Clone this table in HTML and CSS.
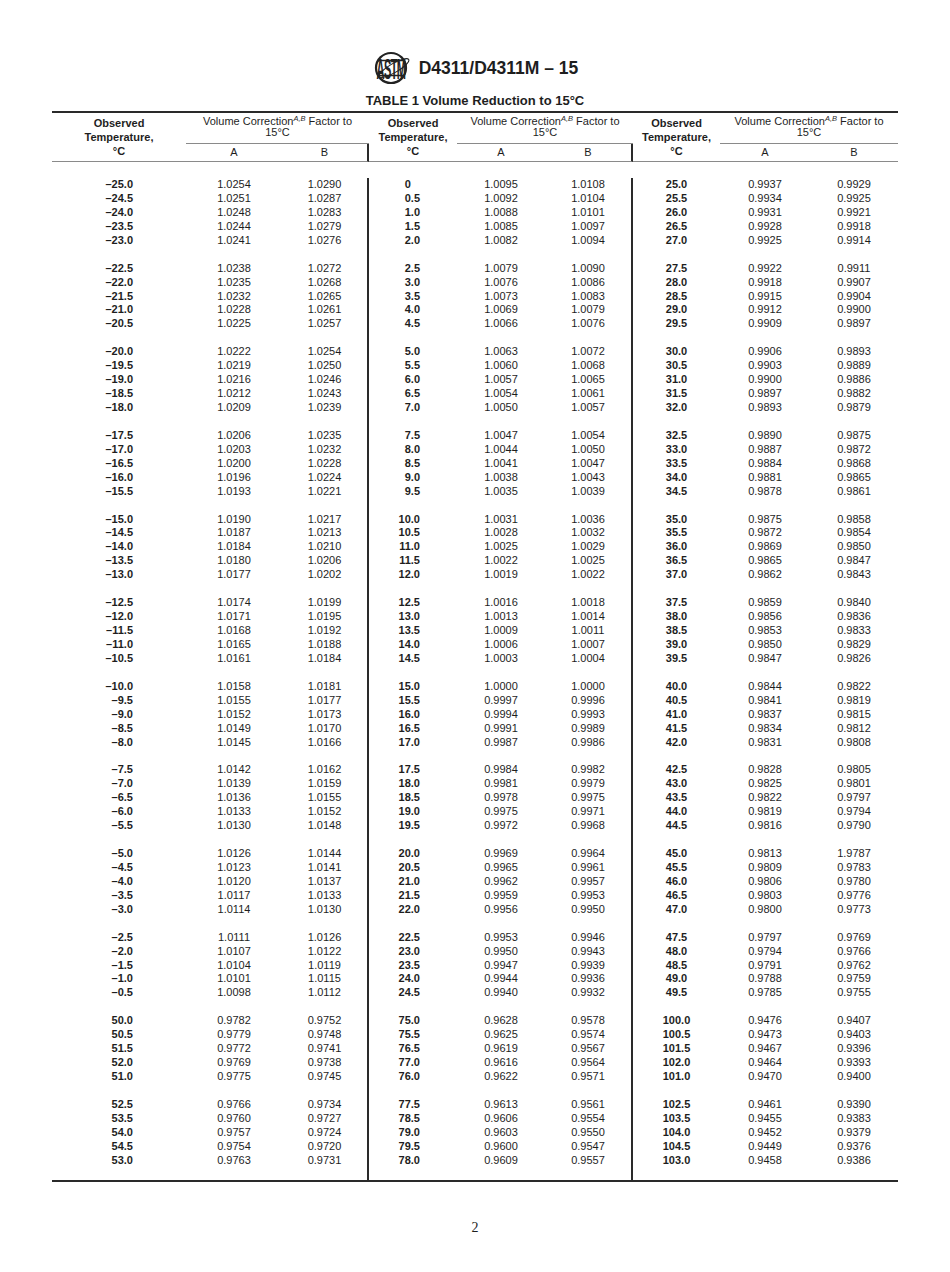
FILE: index.html
```html
<!DOCTYPE html>
<html lang="en">
<head>
<meta charset="utf-8">
<title>D4311/D4311M – 15 Table 1</title>
<link rel="stylesheet" href="styles.css">
</head>
<body>
<div class="page">
  <div class="doc-head">
    <svg class="logo" width="40" height="34" viewBox="0 0 40 34" aria-label="ASTM">
      <circle cx="19" cy="17" r="15" fill="none" stroke="#222" stroke-width="2.2"/>
      <path d="M6 9.5 H32 M6 24.5 H32" stroke="#222" stroke-width="1.4" fill="none"/>
      <ellipse cx="22" cy="17" rx="17" ry="4.5" fill="none" stroke="#222" stroke-width="1.1" transform="rotate(-30 22 17)"/>
      <text class="logo-letters" x="19" y="10.9" transform="scale(1,2.6)">ASTM</text>
    </svg>
    <span class="doc-title">D4311/D4311M – 15</span>
  </div>
  <div class="caption">TABLE 1 Volume Reduction to 15°C</div>
  <table class="tbl">
    <colgroup>
      <col class="c-t1"><col class="c-a1"><col class="c-b1">
      <col class="c-t2"><col class="c-a2"><col class="c-b2">
      <col class="c-t3"><col class="c-a3"><col class="c-b3">
    </colgroup>
    <thead>
      <tr>
        <th class="h-temp" rowspan="2">Observed<br>Temperature,<br>°C</th>
        <th class="h-vc" colspan="2">Volume Correction<sup>A,B</sup> Factor to<br>15°C</th>
        <th class="h-temp" rowspan="2">Observed<br>Temperature,<br>°C</th>
        <th class="h-vc" colspan="2">Volume Correction<sup>A,B</sup> Factor to<br>15°C</th>
        <th class="h-temp" rowspan="2">Observed<br>Temperature,<br>°C</th>
        <th class="h-vc" colspan="2">Volume Correction<sup>A,B</sup> Factor to<br>15°C</th>
      </tr>
      <tr>
        <th class="h-ab">A</th><th class="h-ab sep">B</th>
        <th class="h-ab">A</th><th class="h-ab sep">B</th>
        <th class="h-ab">A</th><th class="h-ab">B</th>
      </tr>
    </thead>
    <tbody>
      <tr class="lead"><td></td><td></td><td></td><td></td><td></td><td></td><td></td><td></td><td></td></tr>

      <tr><td class="t1">–25.0</td><td>1.0254</td><td class="sep">1.0290</td><td class="t2">0<span class="ghost">.0</span></td><td>1.0095</td><td class="sep">1.0108</td><td class="t3">25.0</td><td>0.9937</td><td>0.9929</td></tr>
      <tr><td class="t1">–24.5</td><td>1.0251</td><td class="sep">1.0287</td><td class="t2">0.5</td><td>1.0092</td><td class="sep">1.0104</td><td class="t3">25.5</td><td>0.9934</td><td>0.9925</td></tr>
      <tr><td class="t1">–24.0</td><td>1.0248</td><td class="sep">1.0283</td><td class="t2">1.0</td><td>1.0088</td><td class="sep">1.0101</td><td class="t3">26.0</td><td>0.9931</td><td>0.9921</td></tr>
      <tr><td class="t1">–23.5</td><td>1.0244</td><td class="sep">1.0279</td><td class="t2">1.5</td><td>1.0085</td><td class="sep">1.0097</td><td class="t3">26.5</td><td>0.9928</td><td>0.9918</td></tr>
      <tr><td class="t1">–23.0</td><td>1.0241</td><td class="sep">1.0276</td><td class="t2">2.0</td><td>1.0082</td><td class="sep">1.0094</td><td class="t3">27.0</td><td>0.9925</td><td>0.9914</td></tr>
      <tr class="gap"><td></td><td></td><td class="sep"></td><td></td><td></td><td class="sep"></td><td></td><td></td><td></td></tr>

      <tr><td class="t1">–22.5</td><td>1.0238</td><td class="sep">1.0272</td><td class="t2">2.5</td><td>1.0079</td><td class="sep">1.0090</td><td class="t3">27.5</td><td>0.9922</td><td>0.9911</td></tr>
      <tr><td class="t1">–22.0</td><td>1.0235</td><td class="sep">1.0268</td><td class="t2">3.0</td><td>1.0076</td><td class="sep">1.0086</td><td class="t3">28.0</td><td>0.9918</td><td>0.9907</td></tr>
      <tr><td class="t1">–21.5</td><td>1.0232</td><td class="sep">1.0265</td><td class="t2">3.5</td><td>1.0073</td><td class="sep">1.0083</td><td class="t3">28.5</td><td>0.9915</td><td>0.9904</td></tr>
      <tr><td class="t1">–21.0</td><td>1.0228</td><td class="sep">1.0261</td><td class="t2">4.0</td><td>1.0069</td><td class="sep">1.0079</td><td class="t3">29.0</td><td>0.9912</td><td>0.9900</td></tr>
      <tr><td class="t1">–20.5</td><td>1.0225</td><td class="sep">1.0257</td><td class="t2">4.5</td><td>1.0066</td><td class="sep">1.0076</td><td class="t3">29.5</td><td>0.9909</td><td>0.9897</td></tr>
      <tr class="gap"><td></td><td></td><td class="sep"></td><td></td><td></td><td class="sep"></td><td></td><td></td><td></td></tr>

      <tr><td class="t1">–20.0</td><td>1.0222</td><td class="sep">1.0254</td><td class="t2">5.0</td><td>1.0063</td><td class="sep">1.0072</td><td class="t3">30.0</td><td>0.9906</td><td>0.9893</td></tr>
      <tr><td class="t1">–19.5</td><td>1.0219</td><td class="sep">1.0250</td><td class="t2">5.5</td><td>1.0060</td><td class="sep">1.0068</td><td class="t3">30.5</td><td>0.9903</td><td>0.9889</td></tr>
      <tr><td class="t1">–19.0</td><td>1.0216</td><td class="sep">1.0246</td><td class="t2">6.0</td><td>1.0057</td><td class="sep">1.0065</td><td class="t3">31.0</td><td>0.9900</td><td>0.9886</td></tr>
      <tr><td class="t1">–18.5</td><td>1.0212</td><td class="sep">1.0243</td><td class="t2">6.5</td><td>1.0054</td><td class="sep">1.0061</td><td class="t3">31.5</td><td>0.9897</td><td>0.9882</td></tr>
      <tr><td class="t1">–18.0</td><td>1.0209</td><td class="sep">1.0239</td><td class="t2">7.0</td><td>1.0050</td><td class="sep">1.0057</td><td class="t3">32.0</td><td>0.9893</td><td>0.9879</td></tr>
      <tr class="gap"><td></td><td></td><td class="sep"></td><td></td><td></td><td class="sep"></td><td></td><td></td><td></td></tr>

      <tr><td class="t1">–17.5</td><td>1.0206</td><td class="sep">1.0235</td><td class="t2">7.5</td><td>1.0047</td><td class="sep">1.0054</td><td class="t3">32.5</td><td>0.9890</td><td>0.9875</td></tr>
      <tr><td class="t1">–17.0</td><td>1.0203</td><td class="sep">1.0232</td><td class="t2">8.0</td><td>1.0044</td><td class="sep">1.0050</td><td class="t3">33.0</td><td>0.9887</td><td>0.9872</td></tr>
      <tr><td class="t1">–16.5</td><td>1.0200</td><td class="sep">1.0228</td><td class="t2">8.5</td><td>1.0041</td><td class="sep">1.0047</td><td class="t3">33.5</td><td>0.9884</td><td>0.9868</td></tr>
      <tr><td class="t1">–16.0</td><td>1.0196</td><td class="sep">1.0224</td><td class="t2">9.0</td><td>1.0038</td><td class="sep">1.0043</td><td class="t3">34.0</td><td>0.9881</td><td>0.9865</td></tr>
      <tr><td class="t1">–15.5</td><td>1.0193</td><td class="sep">1.0221</td><td class="t2">9.5</td><td>1.0035</td><td class="sep">1.0039</td><td class="t3">34.5</td><td>0.9878</td><td>0.9861</td></tr>
      <tr class="gap"><td></td><td></td><td class="sep"></td><td></td><td></td><td class="sep"></td><td></td><td></td><td></td></tr>

      <tr><td class="t1">–15.0</td><td>1.0190</td><td class="sep">1.0217</td><td class="t2">10.0</td><td>1.0031</td><td class="sep">1.0036</td><td class="t3">35.0</td><td>0.9875</td><td>0.9858</td></tr>
      <tr><td class="t1">–14.5</td><td>1.0187</td><td class="sep">1.0213</td><td class="t2">10.5</td><td>1.0028</td><td class="sep">1.0032</td><td class="t3">35.5</td><td>0.9872</td><td>0.9854</td></tr>
      <tr><td class="t1">–14.0</td><td>1.0184</td><td class="sep">1.0210</td><td class="t2">11.0</td><td>1.0025</td><td class="sep">1.0029</td><td class="t3">36.0</td><td>0.9869</td><td>0.9850</td></tr>
      <tr><td class="t1">–13.5</td><td>1.0180</td><td class="sep">1.0206</td><td class="t2">11.5</td><td>1.0022</td><td class="sep">1.0025</td><td class="t3">36.5</td><td>0.9865</td><td>0.9847</td></tr>
      <tr><td class="t1">–13.0</td><td>1.0177</td><td class="sep">1.0202</td><td class="t2">12.0</td><td>1.0019</td><td class="sep">1.0022</td><td class="t3">37.0</td><td>0.9862</td><td>0.9843</td></tr>
      <tr class="gap"><td></td><td></td><td class="sep"></td><td></td><td></td><td class="sep"></td><td></td><td></td><td></td></tr>

      <tr><td class="t1">–12.5</td><td>1.0174</td><td class="sep">1.0199</td><td class="t2">12.5</td><td>1.0016</td><td class="sep">1.0018</td><td class="t3">37.5</td><td>0.9859</td><td>0.9840</td></tr>
      <tr><td class="t1">–12.0</td><td>1.0171</td><td class="sep">1.0195</td><td class="t2">13.0</td><td>1.0013</td><td class="sep">1.0014</td><td class="t3">38.0</td><td>0.9856</td><td>0.9836</td></tr>
      <tr><td class="t1">–11.5</td><td>1.0168</td><td class="sep">1.0192</td><td class="t2">13.5</td><td>1.0009</td><td class="sep">1.0011</td><td class="t3">38.5</td><td>0.9853</td><td>0.9833</td></tr>
      <tr><td class="t1">–11.0</td><td>1.0165</td><td class="sep">1.0188</td><td class="t2">14.0</td><td>1.0006</td><td class="sep">1.0007</td><td class="t3">39.0</td><td>0.9850</td><td>0.9829</td></tr>
      <tr><td class="t1">–10.5</td><td>1.0161</td><td class="sep">1.0184</td><td class="t2">14.5</td><td>1.0003</td><td class="sep">1.0004</td><td class="t3">39.5</td><td>0.9847</td><td>0.9826</td></tr>
      <tr class="gap"><td></td><td></td><td class="sep"></td><td></td><td></td><td class="sep"></td><td></td><td></td><td></td></tr>

      <tr><td class="t1">–10.0</td><td>1.0158</td><td class="sep">1.0181</td><td class="t2">15.0</td><td>1.0000</td><td class="sep">1.0000</td><td class="t3">40.0</td><td>0.9844</td><td>0.9822</td></tr>
      <tr><td class="t1">–9.5</td><td>1.0155</td><td class="sep">1.0177</td><td class="t2">15.5</td><td>0.9997</td><td class="sep">0.9996</td><td class="t3">40.5</td><td>0.9841</td><td>0.9819</td></tr>
      <tr><td class="t1">–9.0</td><td>1.0152</td><td class="sep">1.0173</td><td class="t2">16.0</td><td>0.9994</td><td class="sep">0.9993</td><td class="t3">41.0</td><td>0.9837</td><td>0.9815</td></tr>
      <tr><td class="t1">–8.5</td><td>1.0149</td><td class="sep">1.0170</td><td class="t2">16.5</td><td>0.9991</td><td class="sep">0.9989</td><td class="t3">41.5</td><td>0.9834</td><td>0.9812</td></tr>
      <tr><td class="t1">–8.0</td><td>1.0145</td><td class="sep">1.0166</td><td class="t2">17.0</td><td>0.9987</td><td class="sep">0.9986</td><td class="t3">42.0</td><td>0.9831</td><td>0.9808</td></tr>
      <tr class="gap"><td></td><td></td><td class="sep"></td><td></td><td></td><td class="sep"></td><td></td><td></td><td></td></tr>

      <tr><td class="t1">–7.5</td><td>1.0142</td><td class="sep">1.0162</td><td class="t2">17.5</td><td>0.9984</td><td class="sep">0.9982</td><td class="t3">42.5</td><td>0.9828</td><td>0.9805</td></tr>
      <tr><td class="t1">–7.0</td><td>1.0139</td><td class="sep">1.0159</td><td class="t2">18.0</td><td>0.9981</td><td class="sep">0.9979</td><td class="t3">43.0</td><td>0.9825</td><td>0.9801</td></tr>
      <tr><td class="t1">–6.5</td><td>1.0136</td><td class="sep">1.0155</td><td class="t2">18.5</td><td>0.9978</td><td class="sep">0.9975</td><td class="t3">43.5</td><td>0.9822</td><td>0.9797</td></tr>
      <tr><td class="t1">–6.0</td><td>1.0133</td><td class="sep">1.0152</td><td class="t2">19.0</td><td>0.9975</td><td class="sep">0.9971</td><td class="t3">44.0</td><td>0.9819</td><td>0.9794</td></tr>
      <tr><td class="t1">–5.5</td><td>1.0130</td><td class="sep">1.0148</td><td class="t2">19.5</td><td>0.9972</td><td class="sep">0.9968</td><td class="t3">44.5</td><td>0.9816</td><td>0.9790</td></tr>
      <tr class="gap"><td></td><td></td><td class="sep"></td><td></td><td></td><td class="sep"></td><td></td><td></td><td></td></tr>

      <tr><td class="t1">–5.0</td><td>1.0126</td><td class="sep">1.0144</td><td class="t2">20.0</td><td>0.9969</td><td class="sep">0.9964</td><td class="t3">45.0</td><td>0.9813</td><td>1.9787</td></tr>
      <tr><td class="t1">–4.5</td><td>1.0123</td><td class="sep">1.0141</td><td class="t2">20.5</td><td>0.9965</td><td class="sep">0.9961</td><td class="t3">45.5</td><td>0.9809</td><td>0.9783</td></tr>
      <tr><td class="t1">–4.0</td><td>1.0120</td><td class="sep">1.0137</td><td class="t2">21.0</td><td>0.9962</td><td class="sep">0.9957</td><td class="t3">46.0</td><td>0.9806</td><td>0.9780</td></tr>
      <tr><td class="t1">–3.5</td><td>1.0117</td><td class="sep">1.0133</td><td class="t2">21.5</td><td>0.9959</td><td class="sep">0.9953</td><td class="t3">46.5</td><td>0.9803</td><td>0.9776</td></tr>
      <tr><td class="t1">–3.0</td><td>1.0114</td><td class="sep">1.0130</td><td class="t2">22.0</td><td>0.9956</td><td class="sep">0.9950</td><td class="t3">47.0</td><td>0.9800</td><td>0.9773</td></tr>
      <tr class="gap"><td></td><td></td><td class="sep"></td><td></td><td></td><td class="sep"></td><td></td><td></td><td></td></tr>

      <tr><td class="t1">–2.5</td><td>1.0111</td><td class="sep">1.0126</td><td class="t2">22.5</td><td>0.9953</td><td class="sep">0.9946</td><td class="t3">47.5</td><td>0.9797</td><td>0.9769</td></tr>
      <tr><td class="t1">–2.0</td><td>1.0107</td><td class="sep">1.0122</td><td class="t2">23.0</td><td>0.9950</td><td class="sep">0.9943</td><td class="t3">48.0</td><td>0.9794</td><td>0.9766</td></tr>
      <tr><td class="t1">–1.5</td><td>1.0104</td><td class="sep">1.0119</td><td class="t2">23.5</td><td>0.9947</td><td class="sep">0.9939</td><td class="t3">48.5</td><td>0.9791</td><td>0.9762</td></tr>
      <tr><td class="t1">–1.0</td><td>1.0101</td><td class="sep">1.0115</td><td class="t2">24.0</td><td>0.9944</td><td class="sep">0.9936</td><td class="t3">49.0</td><td>0.9788</td><td>0.9759</td></tr>
      <tr><td class="t1">–0.5</td><td>1.0098</td><td class="sep">1.0112</td><td class="t2">24.5</td><td>0.9940</td><td class="sep">0.9932</td><td class="t3">49.5</td><td>0.9785</td><td>0.9755</td></tr>
      <tr class="gap"><td></td><td></td><td class="sep"></td><td></td><td></td><td class="sep"></td><td></td><td></td><td></td></tr>

      <tr><td class="t1">50.0</td><td>0.9782</td><td class="sep">0.9752</td><td class="t2">75.0</td><td>0.9628</td><td class="sep">0.9578</td><td class="t3">100.0</td><td>0.9476</td><td>0.9407</td></tr>
      <tr><td class="t1">50.5</td><td>0.9779</td><td class="sep">0.9748</td><td class="t2">75.5</td><td>0.9625</td><td class="sep">0.9574</td><td class="t3">100.5</td><td>0.9473</td><td>0.9403</td></tr>
      <tr><td class="t1">51.5</td><td>0.9772</td><td class="sep">0.9741</td><td class="t2">76.5</td><td>0.9619</td><td class="sep">0.9567</td><td class="t3">101.5</td><td>0.9467</td><td>0.9396</td></tr>
      <tr><td class="t1">52.0</td><td>0.9769</td><td class="sep">0.9738</td><td class="t2">77.0</td><td>0.9616</td><td class="sep">0.9564</td><td class="t3">102.0</td><td>0.9464</td><td>0.9393</td></tr>
      <tr><td class="t1">51.0</td><td>0.9775</td><td class="sep">0.9745</td><td class="t2">76.0</td><td>0.9622</td><td class="sep">0.9571</td><td class="t3">101.0</td><td>0.9470</td><td>0.9400</td></tr>
      <tr class="gap"><td></td><td></td><td class="sep"></td><td></td><td></td><td class="sep"></td><td></td><td></td><td></td></tr>

      <tr><td class="t1">52.5</td><td>0.9766</td><td class="sep">0.9734</td><td class="t2">77.5</td><td>0.9613</td><td class="sep">0.9561</td><td class="t3">102.5</td><td>0.9461</td><td>0.9390</td></tr>
      <tr><td class="t1">53.5</td><td>0.9760</td><td class="sep">0.9727</td><td class="t2">78.5</td><td>0.9606</td><td class="sep">0.9554</td><td class="t3">103.5</td><td>0.9455</td><td>0.9383</td></tr>
      <tr><td class="t1">54.0</td><td>0.9757</td><td class="sep">0.9724</td><td class="t2">79.0</td><td>0.9603</td><td class="sep">0.9550</td><td class="t3">104.0</td><td>0.9452</td><td>0.9379</td></tr>
      <tr><td class="t1">54.5</td><td>0.9754</td><td class="sep">0.9720</td><td class="t2">79.5</td><td>0.9600</td><td class="sep">0.9547</td><td class="t3">104.5</td><td>0.9449</td><td>0.9376</td></tr>
      <tr><td class="t1">53.0</td><td>0.9763</td><td class="sep">0.9731</td><td class="t2">78.0</td><td>0.9609</td><td class="sep">0.9557</td><td class="t3">103.0</td><td>0.9458</td><td>0.9386</td></tr>
      <tr class="tail"><td></td><td></td><td class="sep"></td><td></td><td></td><td class="sep"></td><td></td><td></td><td></td></tr>
    </tbody>
  </table>
  <div class="pageno">2</div>
</div>
</body>
</html>
```

FILE: styles.css
```css
html, body {
  margin: 0;
  padding: 0;
  background: #ffffff;
}

.page {
  width: 950px;
  color: #1e1e1e;
  font-family: "Liberation Sans", Arial, sans-serif;
}

.doc-head {
  margin-top: 51px;
  height: 34px;
  display: flex;
  align-items: center;
  justify-content: center;
  gap: 7px;
}

.logo {
  display: block;
  overflow: visible;
}

.logo-letters {
  font-family: "Liberation Sans", Arial, sans-serif;
  font-weight: bold;
  font-size: 11px;
  text-anchor: middle;
  fill: #222;
  letter-spacing: -0.6px;
}

.doc-title {
  font-size: 17.5px;
  font-weight: bold;
  line-height: 20px;
}

.caption {
  margin-top: 8px;
  text-align: center;
  font-size: 13px;
  font-weight: bold;
  line-height: 16px;
  margin-bottom: 2px;
}

.tbl {
  margin-left: 52px;
  width: 846px;
  table-layout: fixed;
  border-collapse: separate;
  border-spacing: 0;
  border-top: 2px solid #2a2a2a;
  border-bottom: 2px solid #2a2a2a;
  font-size: 11px;
}

.c-t1 { width: 134px; }
.c-a1 { width: 96px; }
.c-b1 { width: 87px; }
.c-t2 { width: 88px; }
.c-a2 { width: 88px; }
.c-b2 { width: 88px; }
.c-t3 { width: 87px; }
.c-a3 { width: 90px; }
.c-b3 { width: 88px; }

.tbl th,
.tbl td {
  padding: 0;
  box-sizing: border-box;
}

.h-temp {
  font-weight: bold;
  line-height: 14px;
  vertical-align: middle;
  text-align: center;
  border-bottom: 1px solid #8a8a8a;
}

.h-vc {
  font-weight: normal;
  line-height: 11px;
  padding: 3px 0 5px 0 !important;
  text-align: center;
  border-bottom: 1px solid #8a8a8a;
  white-space: nowrap;
}

.h-vc sup {
  font-size: 7.5px;
  font-style: italic;
  vertical-align: 0;
  position: relative;
  top: -4px;
  line-height: 0;
}

.h-ab {
  font-weight: normal;
  line-height: 17px;
  text-align: center;
  border-bottom: 1px solid #8a8a8a;
}

.tbl .sep {
  border-right: 2px solid #2a2a2a;
}

.tbl td {
  line-height: 13.94px;
  height: 13.94px;
  text-align: center;
  white-space: nowrap;
}

.tbl .lead td {
  height: 16px;
  line-height: 16px;
}

.tbl .tail td {
  height: 12px;
  line-height: 12px;
}

.tbl td.t1 {
  font-weight: bold;
  text-align: right;
  padding-right: 53px;
}

.tbl td.t2 {
  font-weight: bold;
  text-align: right;
  padding-right: 37px;
}

.tbl td.t3 {
  font-weight: bold;
  text-align: center;
}

.ghost {
  visibility: hidden;
}

.pageno {
  margin-top: 38px;
  text-align: center;
  font-family: "Liberation Serif", "Times New Roman", serif;
  font-size: 14px;
  line-height: 16px;
}
```
